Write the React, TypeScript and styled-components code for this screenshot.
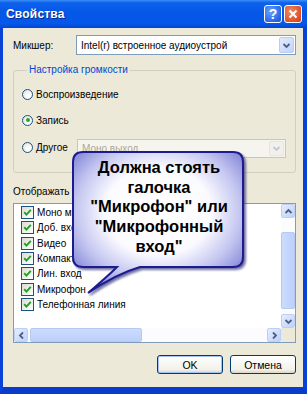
import React from "react";
import styled, { createGlobalStyle } from "styled-components";

const Global = createGlobalStyle`
  html, body {
    margin: 0;
    padding: 0;
    background: #ffffff;
  }
  * {
    box-sizing: border-box;
  }
`;

const items = [
  "Моно микшер",
  "Доб. вход",
  "Видео",
  "Компакт-диск",
  "Лин. вход",
  "Микрофон",
  "Телефонная линия",
];

const Chevron: React.FC<{ dir: "up" | "down" | "left" | "right"; color?: string }> = ({
  dir,
  color = "#4D6185",
}) => {
  const rot = { down: 0, up: 180, left: 90, right: -90 }[dir];
  return (
    <svg width="9" height="9" viewBox="0 0 9 9" style={{ transform: `rotate(${rot}deg)` }}>
      <path d="M1.5 3 L4.5 6 L7.5 3" fill="none" stroke={color} strokeWidth="1.8" />
    </svg>
  );
};

const Check = () => (
  <svg width="9" height="9" viewBox="0 0 9 9">
    <path d="M1.2 4.2 L3.4 6.6 L7.8 1.8" fill="none" stroke="#21A121" strokeWidth="1.9" />
  </svg>
);

const Combo: React.FC<{ text: string; disabled?: boolean }> = ({ text, disabled }) => (
  <ComboBox disabled={disabled}>
    <ComboText disabled={disabled}>{text}</ComboText>
    <ComboButton disabled={disabled}>
      <Chevron dir="down" color={disabled ? "#C3C8D4" : "#4D6185"} />
    </ComboButton>
  </ComboBox>
);

const Radio: React.FC<{ label: string; checked?: boolean }> = ({ label, checked }) => (
  <RadioLabel>
    <RadioCircle>{checked && <RadioDot />}</RadioCircle>
    {label}
  </RadioLabel>
);

export default function App() {
  return (
    <>
      <Global />
      <Window>
        <TitleBar>
          <Title>Свойства</Title>
          <CaptionButtons>
            <CaptionButton kind="help">?</CaptionButton>
            <CaptionButton kind="close">
              <svg width="10" height="10" viewBox="0 0 10 10">
                <path d="M1.5 1.5 L8.5 8.5 M8.5 1.5 L1.5 8.5" stroke="#fff" strokeWidth="2" />
              </svg>
            </CaptionButton>
          </CaptionButtons>
        </TitleBar>

        <Body>
          <MixerRow>
            <Label>Микшер:</Label>
            <Combo text="Intel(r) встроенное аудиоустрой" />
          </MixerRow>

          <Group>
            <Legend>Настройка громкости</Legend>
            <RadioRow height={25}>
              <Radio label="Воспроизведение" />
            </RadioRow>
            <RadioRow height={26}>
              <Radio label="Запись" checked />
            </RadioRow>
            <RadioRow height={28}>
              <Radio label="Другое" />
              <OtherCombo>
                <Combo text="Моно выход" disabled />
              </OtherCombo>
            </RadioRow>
          </Group>

          <ShowLabel>Отображать следующие регуляторы громкости:</ShowLabel>

          <ListBox>
            <Items>
              {items.map((it) => (
                <Item key={it}>
                  <CheckBox>
                    <Check />
                  </CheckBox>
                  {it}
                </Item>
              ))}
            </Items>
            <VScroll>
              <ScrollButton>
                <Chevron dir="up" />
              </ScrollButton>
              <Track size={14} />
              <Thumb vertical length={77} />
              <Track grow />
              <ScrollButton>
                <Chevron dir="down" />
              </ScrollButton>
            </VScroll>
            <HScroll>
              <ScrollButton>
                <Chevron dir="left" />
              </ScrollButton>
              <Track size={2} />
              <Thumb length={112} />
              <Track grow />
              <ScrollButton>
                <Chevron dir="right" />
              </ScrollButton>
            </HScroll>
            <Corner />
          </ListBox>

          <Buttons>
            <Button primary>OK</Button>
            <Button>Отмена</Button>
          </Buttons>
        </Body>

        <Callout>
          <svg width="184" height="150" viewBox="0 0 184 150">
            <defs>
              <radialGradient id="bubble" cx="50%" cy="42%" r="62%">
                <stop offset="0" stopColor="#ffffff" />
                <stop offset="0.5" stopColor="#fbfbff" />
                <stop offset="0.78" stopColor="#c4c6f0" />
                <stop offset="1" stopColor="#8a8dda" />
              </radialGradient>
              <filter id="shadow" x="-10%" y="-10%" width="130%" height="130%">
                <feDropShadow dx="2" dy="2" stdDeviation="1" floodColor="#10106a" floodOpacity="0.6" />
              </filter>
            </defs>
            <path
              d="M15 4 H165 Q175 4 175 14 V109 Q175 119 165 119 H72 Q48 126 20 145 Q40 128 49 119 H15 Q5 119 5 109 V14 Q5 4 15 4 Z"
              fill="url(#bubble)"
              stroke="#1c1f8e"
              strokeWidth="2"
              filter="url(#shadow)"
            />
          </svg>
          <CalloutText>
            Должна стоять
            <br />
            галочка
            <br />
            "Микрофон" или
            <br />
            "Микрофонный
            <br />
            вход"
          </CalloutText>
        </Callout>
      </Window>
    </>
  );
}

const Window = styled.div`
  position: relative;
  width: 307px;
  height: 394px;
  display: flex;
  flex-direction: column;
  font-family: "Liberation Sans", Arial, sans-serif;
  font-size: 10px;
  color: #000;
  overflow: hidden;
`;

const TitleBar = styled.div`
  height: 28px;
  flex: none;
  display: flex;
  align-items: center;
  justify-content: space-between;
  padding: 0 5px 0 6px;
  background: linear-gradient(
    180deg,
    #3d8ef6 0%,
    #0d62ec 10%,
    #0557e6 45%,
    #0658ea 85%,
    #0444d2 100%
  );
`;

const Title = styled.div`
  color: #fff;
  font-weight: bold;
  font-size: 12px;
  letter-spacing: 0.2px;
  text-shadow: 1px 1px 0 #0a2a8a;
`;

const CaptionButtons = styled.div`
  display: flex;
  gap: 2px;
`;

const CaptionButton = styled.div<{ kind: "help" | "close" }>`
  width: 18px;
  height: 18px;
  border: 1px solid #fff;
  border-radius: 3px;
  display: flex;
  align-items: center;
  justify-content: center;
  color: #fff;
  font-weight: bold;
  font-size: 14px;
  background: ${({ kind }) =>
    kind === "help"
      ? "radial-gradient(circle at 35% 35%, #6aa2ff, #2a66e8 70%, #1b4fd0)"
      : "radial-gradient(circle at 35% 35%, #f08a62, #e0502a 70%, #c23a18)"};
`;

const Body = styled.div`
  flex: 1;
  display: flex;
  flex-direction: column;
  background: #ece9d8;
  border-left: 3px solid #0842d6;
  border-right: 4px solid #0842d6;
  border-bottom: 7px solid #0a3ccc;
  padding: 7px 7px 0 10px;
`;

const MixerRow = styled.div`
  display: flex;
  align-items: center;
  height: 20px;
`;

const Label = styled.div`
  width: 63px;
  flex: none;
`;

const ComboBox = styled.div<{ disabled?: boolean }>`
  flex: 1;
  height: 100%;
  display: flex;
  align-items: center;
  border: 1px solid ${({ disabled }) => (disabled ? "#c9c7ba" : "#7f9db9")};
  background: ${({ disabled }) => (disabled ? "#f5f4ee" : "#fff")};
  padding: 1px;
`;

const ComboText = styled.div<{ disabled?: boolean }>`
  flex: 1;
  padding-left: 3px;
  color: ${({ disabled }) => (disabled ? "#aca899" : "#000")};
  white-space: nowrap;
  overflow: hidden;
`;

const ComboButton = styled.div<{ disabled?: boolean }>`
  width: 15px;
  height: 100%;
  border-radius: 2px;
  display: flex;
  align-items: center;
  justify-content: center;
  border: 1px solid ${({ disabled }) => (disabled ? "#e6e5df" : "#b9cdf6")};
  background: ${({ disabled }) =>
    disabled ? "#f1f0ea" : "linear-gradient(135deg, #e3ecfe, #c1d3fb)"};
`;

const Group = styled.fieldset`
  margin: 9px 0 0 0;
  padding: 6px 9px 0 8px;
  height: 109px;
  border: 1px solid #d0d0bf;
  border-radius: 3px;
  min-width: 0;
`;

const Legend = styled.legend`
  padding: 0 2px;
  margin-left: 5px;
  line-height: 12px;
  color: #0046d5;
`;

const RadioRow = styled.div<{ height: number }>`
  height: ${({ height }) => height}px;
  display: flex;
  align-items: center;
`;

const RadioLabel = styled.div`
  display: flex;
  align-items: center;
  gap: 3px;
  width: 55px;
  flex: none;
  white-space: nowrap;
`;

const RadioCircle = styled.div`
  width: 11px;
  height: 11px;
  border-radius: 50%;
  border: 1px solid #1c5180;
  background: radial-gradient(circle at 65% 65%, #ffffff 20%, #dcd9cf 100%);
  display: flex;
  align-items: center;
  justify-content: center;
  flex: none;
`;

const RadioDot = styled.div`
  width: 4px;
  height: 4px;
  border-radius: 50%;
  background: #2aa82a;
`;

const OtherCombo = styled.div`
  flex: 1;
  height: 19px;
  display: flex;
  margin-top: 2px;
`;

const ShowLabel = styled.div`
  margin-top: 13px;
  height: 12px;
  line-height: 12px;
  white-space: nowrap;
`;

const ListBox = styled.div`
  margin-top: 5px;
  height: 140px;
  border: 1px solid #7f9db9;
  background: #fff;
  display: grid;
  grid-template-columns: 1fr 14px;
  grid-template-rows: 1fr 14px;
`;

const Items = styled.div`
  padding: 1px 0 0 7px;
  overflow: hidden;
`;

const Item = styled.div`
  height: 15.3px;
  display: flex;
  align-items: center;
  gap: 3px;
  white-space: nowrap;
`;

const CheckBox = styled.div`
  width: 13px;
  height: 13px;
  border: 1px solid #1c5180;
  background: linear-gradient(135deg, #dcdcd4, #ffffff);
  display: flex;
  align-items: center;
  justify-content: center;
  flex: none;
`;

const VScroll = styled.div`
  display: flex;
  flex-direction: column;
  background: #fcfcfe;
`;

const HScroll = styled.div`
  display: flex;
  background: #fcfcfe;
`;

const Corner = styled.div`
  background: #ece9d8;
`;

const ScrollButton = styled.div`
  width: 14px;
  height: 14px;
  flex: none;
  border: 1px solid #bccff7;
  border-radius: 2px;
  background: linear-gradient(135deg, #e5edfe, #bfd1fb);
  display: flex;
  align-items: center;
  justify-content: center;
`;

const Track = styled.div<{ size?: number; grow?: boolean }>`
  flex: ${({ grow, size }) => (grow ? "1" : `0 0 ${size}px`)};
`;

const Thumb = styled.div<{ vertical?: boolean; length: number }>`
  flex: 0 0 ${({ length }) => length}px;
  border: 1px solid #b5c9f3;
  border-radius: 2px;
  background: ${({ vertical }) =>
    vertical
      ? "linear-gradient(90deg, #cddcfd, #bcd0fb)"
      : "linear-gradient(180deg, #cddcfd, #bcd0fb)"};
`;

const Buttons = styled.div`
  margin-top: 12px;
  display: flex;
  justify-content: flex-end;
  gap: 7px;
`;

const Button = styled.div<{ primary?: boolean }>`
  width: 66px;
  height: 19px;
  border: 1px solid #003c74;
  border-radius: 3px;
  display: flex;
  align-items: center;
  justify-content: center;
  font-size: 10.5px;
  background: linear-gradient(180deg, #ffffff, #f2f1ea 80%, #d9d6c9);
  box-shadow: ${({ primary }) => (primary ? "inset 0 0 0 1px #a6c2f0" : "none")};
`;

const Callout = styled.div`
  position: absolute;
  left: 68px;
  top: 148px;
  width: 184px;
  height: 150px;

  svg {
    position: absolute;
    left: 0;
    top: 0;
  }
`;

const CalloutText = styled.div`
  position: relative;
  margin-left: 5px;
  width: 172px;
  padding-top: 10px;
  text-align: center;
  font-family: "Liberation Sans", Arial, sans-serif;
  font-weight: bold;
  font-size: 16.5px;
  line-height: 19.7px;
  color: #000;
`;
